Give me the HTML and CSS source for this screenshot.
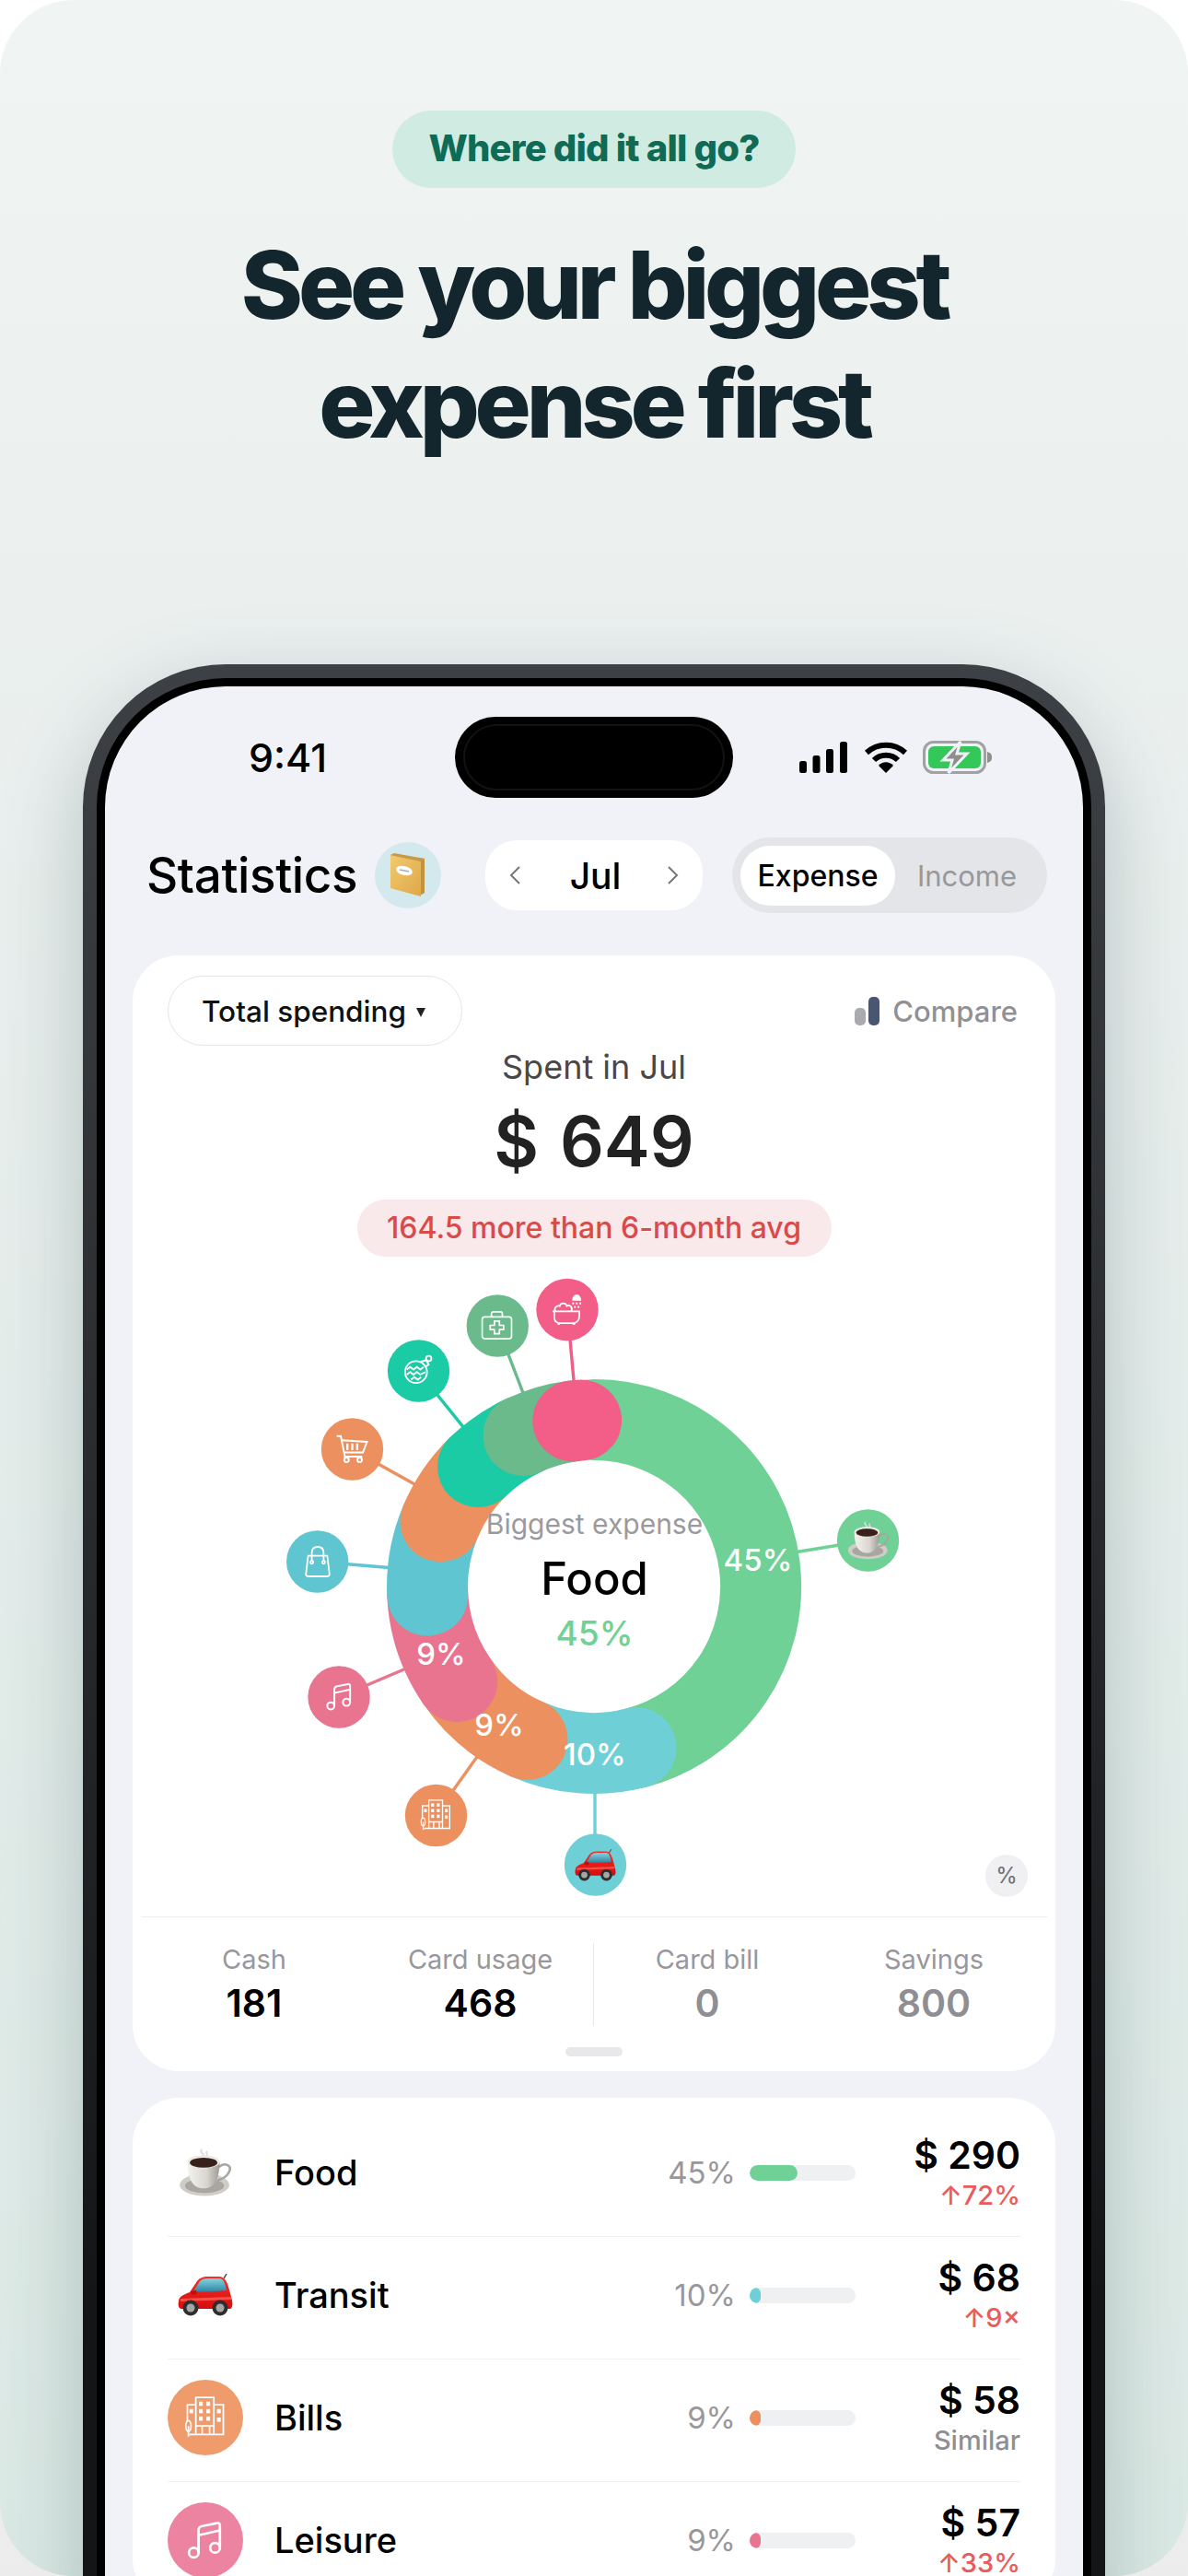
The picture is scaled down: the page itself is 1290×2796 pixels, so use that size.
FILE: index.html
```html
<!DOCTYPE html>
<html>
  <head>
    <meta charset="UTF-8">
    <meta name="viewport" content="width=device-width, initial-scale=1.0">
    <title>Statistics</title>
    <link rel="stylesheet" href="styles.css">
  </head>
  <body>
    <div class="poster">
      <div class="tag">Where did it all go?</div>
      <h1 class="headline">See your biggest<br>expense first</h1>

      <div class="phone">
        <div class="phone-inner">
          <div class="screen">

            <!-- status bar -->
            <div class="status">
              <div class="time">9:41</div>
              <div class="island"><div class="island-ring"></div></div>
              <div class="status-icons">
                <svg width="54" height="34" viewBox="0 0 54 34">
                  <rect x="0" y="21" width="8" height="13" rx="2.5"/>
                  <rect x="14.5" y="15" width="8" height="19" rx="2.5"/>
                  <rect x="29" y="8" width="8" height="26" rx="2.5"/>
                  <rect x="44" y="0" width="8" height="34" rx="2.5"/>
                </svg>
                <svg width="48" height="34" viewBox="0 0 48 34">
                  <path d="M3 12 C15 1 33 1 45 12" fill="none" stroke="#000" stroke-width="6"/>
                  <path d="M11 20 C18 13 30 13 37 20" fill="none" stroke="#000" stroke-width="6"/>
                  <path d="M16 26 C20 21 28 21 32 26 L24 34 Z"/>
                </svg>
                <svg width="76" height="36" viewBox="0 0 76 36">
                  <rect x="1.5" y="1.5" width="66" height="33" rx="10" fill="none" stroke="#a0a1a1" stroke-width="3"/>
                  <rect x="6" y="6" width="57" height="24" rx="6" fill="#34c759"/>
                  <path d="M70 12 C74 13 75 15 75 18 C75 21 74 23 70 24 Z" fill="#8f8f8f"/>
                  <path d="M41 1 L22 21 H32 L28 35 L48 14 H37 Z" fill="#8d8f8f" stroke="#f1f2f7" stroke-width="3"/>
                </svg>
              </div>
            </div>

            <!-- title row -->
            <div class="top-bar">
              <div class="page-title">Statistics</div>
              <div class="book-badge">
                <svg width="42" height="50" viewBox="0 0 42 50">
                  <defs>
                    <linearGradient id="bookGrad" x1="0" y1="0" x2="1" y2="1">
                      <stop offset="0" stop-color="#f2ca6c"/>
                      <stop offset="1" stop-color="#dda84a"/>
                    </linearGradient>
                  </defs>
                  <path d="M3 2 L39 7 V44 L34 47 L4 38 Z" fill="#a9a297"/>
                  <path d="M34 9 L39 7 V44 L34 46 Z" fill="#c3923c"/>
                  <path d="M2 3 L35 10 V48 L2 39 Z" fill="url(#bookGrad)"/>
                  <path d="M2 3 L6 1 L39 7 L35 10 Z" fill="#c99a45"/>
                  <ellipse cx="17" cy="20" rx="9" ry="5" transform="rotate(14 17 20)" fill="#fff"/>
                  <path d="M12 19 L22 21" stroke="#aaa" stroke-width="1.5"/>
                </svg>
              </div>
              <div class="month">
                <svg width="14" height="20" viewBox="0 0 14 20"><path d="M12 1 L3 10 L12 19" fill="none" stroke="#777" stroke-width="2"/></svg>
                <span class="month-name">Jul</span>
                <svg width="14" height="20" viewBox="0 0 14 20"><path d="M2 1 L11 10 L2 19" fill="none" stroke="#777" stroke-width="2"/></svg>
              </div>
              <div class="toggle">
                <div class="toggle-on">Expense</div>
                <div class="toggle-off">Income</div>
              </div>
            </div>

            <!-- summary card -->
            <div class="card summary">
              <div class="summary-top">
                <div class="filter">Total spending <span class="caret"></span></div>
                <div class="compare">
                  <span class="compare-bars"><i class="bar-low"></i><i class="bar-high"></i></span>
                  Compare
                </div>
              </div>
              <div class="spent-label">Spent in Jul</div>
              <div class="spent-value">$ 649</div>
              <div class="avg-wrap"><div class="avg">164.5 more than 6-month avg</div></div>

              <svg class="chart" width="1003" height="696" viewBox="144 1376 1003 696">
                <defs>
                  <linearGradient id="cupGrad" x1="0" y1="0" x2="1" y2="0">
                    <stop offset="0" stop-color="#f4f2ee"/>
                    <stop offset="0.6" stop-color="#d9d6d0"/>
                    <stop offset="1" stop-color="#9d9a95"/>
                  </linearGradient>
                  <linearGradient id="carGrad" x1="0" y1="0" x2="0" y2="1">
                    <stop offset="0" stop-color="#f3302a"/>
                    <stop offset="1" stop-color="#d80c0c"/>
                  </linearGradient>
                  <linearGradient id="glassGrad" x1="0" y1="0" x2="0" y2="1">
                    <stop offset="0" stop-color="#86d3de"/>
                    <stop offset="1" stop-color="#2d86a3"/>
                  </linearGradient>

                  <symbol id="i-coffee" viewBox="0 0 60 54">
                    <path d="M26 1 C22 5 31 6 27 10 M32 3 C29 6 35 8 32 12" fill="none" stroke="#dcdcdc" stroke-width="2"/>
                    <ellipse cx="29" cy="41" rx="28" ry="12.5" fill="#cfcdc6"/>
                    <ellipse cx="29" cy="42" rx="22" ry="8" fill="#a9a69f"/>
                    <path d="M45 21 C52 15 60 19 57 26 C55 31 49 35 43 36" fill="none" stroke="#a8a6a1" stroke-width="2.6"/>
                    <path d="M10 15 C10 33 15 45 28 45 C41 45 46 33 46 15 Z" fill="url(#cupGrad)"/>
                    <ellipse cx="28" cy="15" rx="18" ry="7.5" fill="#ecebe7"/>
                    <ellipse cx="28" cy="16" rx="15.5" ry="5.6" fill="#38211a"/>
                  </symbol>

                  <symbol id="i-car" viewBox="0 0 60 46">
                    <path d="M50 5 L53 0" stroke="#555" stroke-width="1.5"/>
                    <path d="M1 30 C1 25 5 23 13 20 L21 8 C23 5 27 3 33 3 L45 3 C50 3 53 7 55 14 L58 25 C60 31 60 37 57 38 L4 38 C1 38 0 34 1 30 Z" fill="url(#carGrad)"/>
                    <path d="M17 19 L24 8 C26 6 29 5 33 5 L45 5 C49 5 51 8 53 18 C43 19 29 20 17 19 Z" fill="url(#glassGrad)"/>
                    <path d="M14 19 L20 18 L21 22 L15 23 Z" fill="#c40d0d"/>
                    <path d="M3 27 C20 26 42 26 58 25 L58 28 C42 29 20 29 3 30 Z" fill="#ff6a5c" opacity="0.7"/>
                    <circle cx="14" cy="37" r="8.5" fill="#2e2e2e"/>
                    <circle cx="14" cy="37" r="4.5" fill="#a6a6a6"/>
                    <circle cx="46" cy="37" r="8.5" fill="#2e2e2e"/>
                    <circle cx="46" cy="37" r="4.5" fill="#a6a6a6"/>
                  </symbol>

                  <symbol id="i-building" viewBox="0 0 40 40">
                    <g fill="none" stroke="#fff" stroke-width="1.5">
                      <path d="M11 36 V1 H28 V36"/>
                      <path d="M11 8 H3 V24 M28 8 H37 V36 H5"/>
                      <path d="M17 36 V28 H24 V36 M11 28 H28"/>
                      <ellipse cx="4" cy="28" rx="2.5" ry="5"/>
                      <path d="M4 28 V38"/>
                    </g>
                    <g fill="#fff">
                      <rect x="14" y="5" width="3.5" height="4"/><rect x="21" y="5" width="3.5" height="4"/>
                      <rect x="14" y="12" width="3.5" height="4"/><rect x="21" y="12" width="3.5" height="4"/>
                      <rect x="14" y="19" width="3.5" height="4"/><rect x="21" y="19" width="3.5" height="4"/>
                      <rect x="5" y="12" width="3.5" height="4"/><rect x="31" y="12" width="3.5" height="4"/>
                      <rect x="31" y="20" width="3.5" height="4"/>
                    </g>
                  </symbol>

                  <symbol id="i-music" viewBox="0 0 40 40">
                    <g fill="none" stroke="#fff" stroke-width="2.6">
                      <circle cx="8" cy="33" r="5"/>
                      <circle cx="30" cy="28" r="5"/>
                      <path d="M13 33 V10 C13 7 14 6 17 5.5 L32 2.5 C34 2 35 3 35 5 V28"/>
                      <path d="M13 15 L35 10"/>
                    </g>
                  </symbol>

                  <symbol id="i-bag" viewBox="0 0 40 44">
                    <g fill="none" stroke="#fff" stroke-width="2.2">
                      <path d="M7 14 H33 L36 39 C36 41 35 42 33 42 H7 C5 42 4 41 4 39 Z"/>
                      <path d="M12 22 V10 C12 4 15 2 20 2 C25 2 28 4 28 10 V22"/>
                      <circle cx="12" cy="23" r="2"/>
                      <circle cx="28" cy="23" r="2"/>
                    </g>
                  </symbol>

                  <symbol id="i-cart" viewBox="0 0 40 36">
                    <g fill="none" stroke="#fff" stroke-width="2.2">
                      <path d="M1 2 H6 L11 27 H32"/>
                      <path d="M7 7 L38 9 L33 22 L10 22"/>
                      <path d="M14 11 V19 M20 11 V19 M26 11 V19" stroke-width="2.6"/>
                      <circle cx="13" cy="31" r="2.8"/>
                      <circle cx="29" cy="31" r="2.8"/>
                    </g>
                  </symbol>

                  <symbol id="i-ornament" viewBox="0 0 36 36">
                    <g fill="none" stroke="#fff" stroke-width="2">
                      <circle cx="15" cy="21" r="13"/>
                      <circle cx="30" cy="5" r="3.2"/>
                      <path d="M20 9 L27 7 L30 12 L26 15"/>
                      <path d="M4 18 L8 15 L12 18 L16 15 L20 18 L24 15 M4 24 L8 21 L12 24 L16 21 L20 24 L26 21 M9 30 L13 27 L17 30 L21 27"/>
                    </g>
                  </symbol>

                  <symbol id="i-kit" viewBox="0 0 38 34">
                    <g fill="none" stroke="#fff" stroke-width="1.8">
                      <rect x="1" y="7" width="35" height="26" rx="3"/>
                      <path d="M12 7 V3 C12 2 13 1 14 1 H23 C24 1 25 2 25 3 V7"/>
                      <path d="M15.5 12 H21.5 V17 H26.5 V22 H21.5 V27 H15.5 V22 H10.5 V17 H15.5 Z"/>
                    </g>
                  </symbol>

                  <symbol id="i-bath" viewBox="0 0 34 36">
                    <g fill="none" stroke="#fff" stroke-width="1.8">
                      <path d="M1 20 H32 M3 20 V27 C3 31 6 33 10 33 H24 C28 33 31 30 31 25 V20"/>
                      <path d="M4 20 C2 15 7 13 9 14 C10 10 16 10 17 14 C20 12 24 15 22 20"/>
                      <path d="M8 33 V35 M25 33 V35" stroke-width="2.6"/>
                    </g>
                    <g fill="#fff">
                      <path d="M23 8 C23 4 25 1 28 1 C31 1 33 4 33 8 Z"/>
                      <rect x="23" y="10" width="2" height="2"/><rect x="27" y="10" width="2" height="2"/><rect x="31" y="10" width="2" height="2"/>
                      <rect x="25" y="14" width="2" height="2"/><rect x="29" y="14" width="2" height="2"/>
                    </g>
                  </symbol>
                </defs>

                <!-- leader lines, under the ring -->
                <g stroke-width="3.4">
                  <line x1="942" y1="1672" x2="850" y2="1687" stroke="#6fd195"/>
                  <line x1="646" y1="2024" x2="646" y2="1930" stroke="#6ed0d6"/>
                  <line x1="473" y1="1970" x2="530" y2="1890" stroke="#ec905f"/>
                  <line x1="368" y1="1842" x2="455" y2="1805" stroke="#e8748f"/>
                  <line x1="345" y1="1695" x2="440" y2="1703" stroke="#5fc5d0"/>
                  <line x1="382" y1="1573" x2="470" y2="1622" stroke="#ec905f"/>
                  <line x1="454" y1="1488" x2="520" y2="1570" stroke="#1bcba5"/>
                  <line x1="540" y1="1439" x2="575" y2="1530" stroke="#6aba8b"/>
                  <line x1="616" y1="1421" x2="625" y2="1520" stroke="#f35e88"/>
                </g>

                <!-- ring segments, each one lies on the one before -->
                <g fill="none" stroke-width="88" stroke-linecap="round">
                  <path d="M645 1541 A181 181 0 0 1 690.6 1897.2" stroke="#6fd195"/>
                  <path d="M690.6 1897.2 A181 181 0 0 1 572.5 1887.9" stroke="#6ed0d6"/>
                  <path d="M572.5 1887.9 A181 181 0 0 1 496.2 1825" stroke="#ec905f"/>
                  <path d="M496.2 1825 A181 181 0 0 1 464.3 1731.5" stroke="#e8748f"/>
                  <path d="M464.3 1731.5 A181 181 0 0 1 478.4 1651.3" stroke="#5fc5d0"/>
                  <path d="M478.4 1651.3 A181 181 0 0 1 519 1592" stroke="#ec905f"/>
                  <path d="M519 1592 A181 181 0 0 1 568.5 1558" stroke="#1bcba5"/>
                  <path d="M568.5 1558 A181 181 0 0 1 622.3 1542.4" stroke="#6aba8b"/>
                  <path d="M622.3 1542.4 A181 181 0 0 1 631.1 1541.5" stroke="#f35e88"/>
                </g>

                <text class="ring-pct" x="823" y="1705">45%</text>
                <text class="ring-pct" x="646" y="1916">10%</text>
                <text class="ring-pct" x="542" y="1884">9%</text>
                <text class="ring-pct" x="479" y="1807">9%</text>

                <text class="center-label" x="645.5" y="1665">Biggest expense</text>
                <text class="center-name" x="645.5" y="1731">Food</text>
                <text class="center-pct" x="645.5" y="1786">45%</text>

                <!-- category bubbles -->
                <circle cx="942.5" cy="1672" r="33.7" fill="#6fd195"/>
                <use href="#i-coffee" x="920" y="1651" width="46" height="42"/>
                <circle cx="646.5" cy="2024" r="33.7" fill="#6ed0d6"/>
                <use href="#i-car" x="624" y="2007" width="45" height="35"/>
                <circle cx="473.5" cy="1970.5" r="33.7" fill="#ec905f"/>
                <use href="#i-building" x="456" y="1953" width="35" height="35"/>
                <circle cx="368" cy="1842" r="33.7" fill="#e8748f"/>
                <use href="#i-music" x="353" y="1826" width="31" height="31"/>
                <circle cx="344.7" cy="1695" r="33.7" fill="#5fc5d0"/>
                <use href="#i-bag" x="329" y="1677" width="32" height="36"/>
                <circle cx="382.5" cy="1573" r="33.7" fill="#ec905f"/>
                <use href="#i-cart" x="364" y="1557" width="37" height="32"/>
                <circle cx="454.5" cy="1488" r="33.7" fill="#1bcba5"/>
                <use href="#i-ornament" x="438" y="1470" width="33" height="33"/>
                <circle cx="540.3" cy="1439" r="33.7" fill="#6aba8b"/>
                <use href="#i-kit" x="522" y="1423" width="36" height="31"/>
                <circle cx="616" cy="1421.5" r="33.7" fill="#f35e88"/>
                <use href="#i-bath" x="599" y="1404" width="33" height="35"/>
              </svg>

              <div class="pct-button">%</div>

              <div class="stats">
                <div class="stat"><span class="stat-label">Cash</span><span class="stat-value">181</span></div>
                <div class="stat stat-split"><span class="stat-label">Card usage</span><span class="stat-value">468</span></div>
                <div class="stat"><span class="stat-label">Card bill</span><span class="stat-value muted">0</span></div>
                <div class="stat"><span class="stat-label">Savings</span><span class="stat-value muted">800</span></div>
              </div>
              <div class="handle"></div>
            </div>

            <!-- category list -->
            <div class="card list">
              <div class="row">
                <div class="row-icon"><svg width="58" height="52"><use href="#i-coffee" width="58" height="52"/></svg></div>
                <div class="row-name">Food</div>
                <div class="row-pct">45%</div>
                <div class="meter"><div class="meter-fill green" style="width: 52px"></div></div>
                <div class="row-amount"><div class="amount">$ 290</div><div class="delta up">↑72%</div></div>
              </div>
              <div class="row">
                <div class="row-icon"><svg width="60" height="46"><use href="#i-car" width="60" height="46"/></svg></div>
                <div class="row-name">Transit</div>
                <div class="row-pct">10%</div>
                <div class="meter"><div class="meter-fill cyan" style="width: 12px"></div></div>
                <div class="row-amount"><div class="amount">$ 68</div><div class="delta up">↑9×</div></div>
              </div>
              <div class="row">
                <div class="row-icon round orange"><svg width="46" height="46"><use href="#i-building" width="46" height="46"/></svg></div>
                <div class="row-name">Bills</div>
                <div class="row-pct">9%</div>
                <div class="meter"><div class="meter-fill orange" style="width: 12px"></div></div>
                <div class="row-amount"><div class="amount">$ 58</div><div class="delta">Similar</div></div>
              </div>
              <div class="row">
                <div class="row-icon round pink"><svg width="42" height="42"><use href="#i-music" width="42" height="42"/></svg></div>
                <div class="row-name">Leisure</div>
                <div class="row-pct">9%</div>
                <div class="meter"><div class="meter-fill pink" style="width: 12px"></div></div>
                <div class="row-amount"><div class="amount">$ 57</div><div class="delta up">↑33%</div></div>
              </div>
            </div>

          </div>
        </div>
      </div>
    </div>
  </body>
</html>
```

FILE: styles.css
```css
* {
  box-sizing: border-box;
  margin: 0;
  padding: 0;
}

body {
  font-family: Inter, "Noto Sans", sans-serif;
  background: linear-gradient(#ffffff, #ececec);
  width: 1290px;
  height: 2796px;
  overflow: hidden;
}

.poster {
  width: 1290px;
  height: 2796px;
  border-radius: 80px;
  overflow: hidden;
  padding-top: 120px;
  background: linear-gradient(#f0f4f3 0%, #ebf0ef 25%, #dbe9e5 100%);
}

.tag {
  width: 438px;
  height: 84px;
  margin: 0 auto;
  border-radius: 42px;
  background-color: #d0ebe1;
  color: #0f6b56;
  font-size: 40px;
  font-weight: 800;
  letter-spacing: -0.8px;
  line-height: 82px;
  text-align: center;
}

.headline {
  margin-top: 41px;
  color: #13262e;
  font-size: 102px;
  font-weight: 800;
  line-height: 129px;
  letter-spacing: -5.2px;
  text-align: center;
}

.phone {
  width: 1110px;
  height: 2240px;
  margin: 0 auto;
  margin-top: 218px;
  padding: 15px;
  border-radius: 155px;
  background: linear-gradient(#3d4045 0%, #141517 80%);
  box-shadow: 0 30px 90px rgba(60, 90, 85, 0.3);
}

.phone-inner {
  height: 100%;
  padding: 9px;
  border-radius: 140px;
  background-color: #000;
}

.screen {
  height: 100%;
  border-radius: 131px;
  overflow: hidden;
  background-color: #f1f2f7;
}

/* status bar */
.status {
  display: grid;
  grid-template-columns: 380px 302px 1fr;
  padding-top: 33px;
  align-items: center;
}

.time {
  padding-left: 156px;
  font-size: 43px;
  font-weight: 500;
  color: #000;
}

.island {
  height: 88px;
  padding: 8px 9px;
  border-radius: 44px;
  background-color: #000;
}

.island-ring {
  height: 100%;
  border: 2px solid #121212;
  border-radius: 36px;
}

.status-icons {
  display: flex;
  align-items: center;
  gap: 16px;
  padding-left: 72px;
}

/* title row */
.top-bar {
  display: flex;
  align-items: center;
  margin-top: 43px;
  padding-left: 45px;
}

.page-title {
  width: 248px;
  font-size: 53px;
  font-weight: 500;
  letter-spacing: -0.4px;
  color: #000;
}

.book-badge {
  display: flex;
  align-items: center;
  justify-content: center;
  width: 72px;
  height: 72px;
  border-radius: 50%;
  background-color: #d3e9ed;
}

.month {
  display: flex;
  align-items: center;
  justify-content: space-between;
  width: 236px;
  height: 76px;
  margin-left: 48px;
  padding: 0 25px 0 25px;
  border-radius: 34px;
  background-color: #fff;
}

.month-name {
  margin-left: 3px;
  font-size: 39px;
  font-weight: 500;
  color: #000;
}

.toggle {
  display: flex;
  align-items: center;
  width: 342px;
  height: 82px;
  margin-left: 32px;
  padding: 0 9px;
  border-radius: 41px;
  background-color: #e4e5e9;
  font-size: 32px;
  font-weight: 500;
}

.toggle-on {
  width: 168px;
  height: 65px;
  border-radius: 32px;
  background-color: #fff;
  color: #000;
  line-height: 65px;
  text-align: center;
}

.toggle-off {
  flex: 1;
  color: #97989c;
  font-size: 31px;
  font-weight: 400;
  text-align: center;
}

/* cards */
.card {
  margin: 0 30px;
  border-radius: 50px;
  background-color: #fff;
}

.summary {
  position: relative;
  height: 1211px;
  margin-top: 46px;
  padding-top: 22px;
}

.summary-top {
  display: flex;
  align-items: center;
  justify-content: space-between;
  padding: 0 41px 0 38px;
}

.filter {
  display: flex;
  align-items: center;
  gap: 11px;
  width: 320px;
  height: 76px;
  padding-left: 36px;
  border: 1.5px solid #e5e5e7;
  border-radius: 38px;
  font-size: 31.5px;
  font-weight: 500;
  color: #111;
}

.caret {
  width: 0;
  height: 0;
  margin-top: 4px;
  border-left: 5px solid transparent;
  border-right: 5px solid transparent;
  border-top: 10px solid #222;
}

.compare {
  display: flex;
  align-items: center;
  gap: 14px;
  font-size: 31px;
  font-weight: 500;
  color: #909195;
}

.compare-bars {
  display: flex;
  align-items: flex-end;
  gap: 3px;
}

.bar-low {
  width: 12px;
  height: 19px;
  border-radius: 5px;
  background-color: #a9abaf;
}

.bar-high {
  width: 12px;
  height: 31px;
  border-radius: 5px;
  background-color: #4a566f;
}

.spent-label {
  margin-top: 1px;
  font-size: 36px;
  line-height: 44px;
  color: #48484a;
  text-align: center;
}

.spent-value {
  margin-top: 14px;
  font-size: 75px;
  font-weight: 600;
  word-spacing: 4px;
  line-height: 90px;
  color: #222;
  text-align: center;
}

.avg-wrap {
  display: flex;
  justify-content: center;
  margin-top: 18px;
}

.avg {
  width: 515px;
  height: 62px;
  border-radius: 31px;
  background-color: #f9e9ea;
  color: #d94a4a;
  font-size: 32px;
  font-weight: 500;
  line-height: 61px;
  text-align: center;
}

.chart {
  display: block;
  margin-top: 12px;
}

.ring-pct {
  fill: #fff;
  font-size: 33px;
  font-weight: 500;
  text-anchor: middle;
}

.center-label {
  fill: #9a9a9e;
  font-size: 30px;
  text-anchor: middle;
}

.center-name {
  fill: #000;
  font-size: 49px;
  font-weight: 500;
  text-anchor: middle;
}

.center-pct {
  fill: #6fd195;
  font-size: 37px;
  font-weight: 500;
  text-anchor: middle;
}

.pct-button {
  position: absolute;
  top: 976px;
  right: 30px;
  width: 46px;
  height: 46px;
  border-radius: 50%;
  background-color: #f0f0f2;
  color: #6f6f73;
  font-size: 24px;
  line-height: 46px;
  text-align: center;
}

.stats {
  display: grid;
  grid-template-columns: repeat(4, 246px);
  margin: 8px 9px 0;
  padding-top: 28px;
  border-top: 1.5px solid #eeeeef;
}

.stat {
  display: flex;
  flex-direction: column;
  align-items: center;
}

.stat-split {
  border-right: 1.5px solid #e6e6e8;
}

.stat-label {
  font-size: 29px;
  line-height: 36px;
  color: #98989c;
}

.stat-value {
  margin-top: 4px;
  font-size: 41px;
  font-weight: 600;
  line-height: 50px;
  color: #000;
}

.stat-value.muted {
  color: #8e8e93;
}

.handle {
  width: 62px;
  height: 10px;
  margin: 23px auto 0;
  border-radius: 5px;
  background-color: #e8e8ea;
}

/* category list */
.list {
  margin-top: 29px;
  padding: 18px 38px 0;
}

.row {
  display: flex;
  align-items: center;
  height: 133px;
  padding-bottom: 6px;
  border-bottom: 1.5px solid #f0f0f2;
}

.row-icon {
  display: flex;
  align-items: center;
  justify-content: center;
  flex-shrink: 0;
  width: 82px;
  height: 82px;
  margin-right: 34px;
}

.row-icon.round {
  border-radius: 50%;
}

.row-icon.orange {
  background-color: #ef9b6c;
}

.row-icon.pink {
  background-color: #ec83a0;
}

.row-name {
  flex: 1;
  font-size: 38px;
  font-weight: 500;
  color: #000;
}

.row-pct {
  font-size: 33px;
  color: #98989c;
}

.meter {
  width: 115px;
  height: 17px;
  margin-left: 15px;
  border-radius: 9px;
  background-color: #eff0f2;
  overflow: hidden;
}

.meter-fill {
  height: 100%;
  border-radius: 9px;
}

.meter-fill.green {
  background-color: #6fd195;
}

.meter-fill.cyan {
  background-color: #6ed0d6;
}

.meter-fill.orange {
  background-color: #ec905f;
}

.meter-fill.pink {
  background-color: #e8748f;
}

.row-amount {
  width: 179px;
  text-align: right;
}

.amount {
  font-size: 41px;
  font-weight: 600;
  line-height: 50px;
  color: #000;
}

.delta {
  font-size: 29px;
  font-weight: 500;
  line-height: 38px;
  color: #8e8e93;
}

.delta.up {
  color: #e85c5c;
}
```
